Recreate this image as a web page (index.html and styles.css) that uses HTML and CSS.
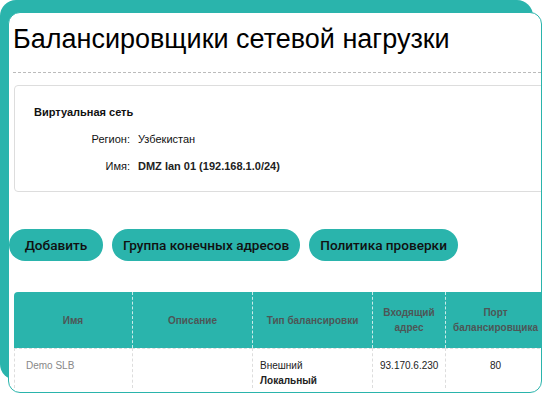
FILE: index.html
```html
<!DOCTYPE html>
<html lang="ru">
<head>
    <meta charset="UTF-8">
    <title>Балансировщики сетевой нагрузки</title>
    <link rel="stylesheet" href="styles.css">
</head>
<body>

<div class="frame">
    <div class="card">
        <h1 class="title">Балансировщики сетевой нагрузки</h1>
        <div class="divider"></div>

        <div class="info">
            <div class="info-head">Виртуальная сеть</div>
            <div class="info-label">Регион:</div>
            <div class="info-value">Узбекистан</div>
            <div class="info-label">Имя:</div>
            <div class="info-value strong">DMZ lan 01 (192.168.1.0/24)</div>
        </div>

        <div class="actions">
            <button class="btn btn-add">Добавить</button>
            <button class="btn">Группа конечных адресов</button>
            <button class="btn">Политика проверки</button>
        </div>

        <table class="grid">
            <colgroup>
                <col class="col-name">
                <col class="col-desc">
                <col class="col-type">
                <col class="col-addr">
                <col class="col-port">
            </colgroup>
            <thead>
                <tr>
                    <th>Имя</th>
                    <th>Описание</th>
                    <th>Тип балансировки</th>
                    <th>Входящий<br>адрес</th>
                    <th>Порт<br>балансировщика</th>
                </tr>
            </thead>
            <tbody>
                <tr>
                    <td class="name">Demo SLB</td>
                    <td></td>
                    <td>Внешний<br><b>Локальный</b></td>
                    <td class="center">93.170.6.230</td>
                    <td class="center">80</td>
                </tr>
            </tbody>
        </table>
    </div>
</div>

</body>
</html>
```

FILE: styles.css
```css
html, body {
    margin: 0;
    height: 394px;
    overflow: hidden;
    background-color: white;
    font-family: "Liberation Sans", Arial, sans-serif;
}
.frame {
    width: 533px;
    height: 380px;
    padding: 12px 0 0 8px;
    box-sizing: border-box;
    background-color: #2ab4ac;
    border-radius: 16px;
}
.card {
    width: 534px;
    height: 381px;
    box-sizing: border-box;
    background-color: white;
    border: 1px solid #2ab4ac;
    border-radius: 12px;
    overflow: hidden;
}
.title {
    margin: 0;
    padding: 11px 0 0 4px;
    font-size: 27px;
    font-weight: normal;
    line-height: 30px;
    color: #000;
}
.divider {
    margin: 18px 0 0 4px;
    border-top: 1px dashed #bbb;
}
.info {
    display: grid;
    grid-template-columns: 96px auto;
    column-gap: 8px;
    row-gap: 10px;
    align-content: start;
    width: 560px;
    height: 107px;
    box-sizing: border-box;
    margin: 12px 0 0 5px;
    padding: 18px 19px;
    border: 1px solid #ddd;
    border-radius: 4px;
    font-size: 11px;
    line-height: 17px;
    color: #111;
}
.info-head {
    grid-column: 1 / 3;
    font-weight: bold;
}
.info-label {
    text-align: right;
}
.strong {
    font-weight: bold;
    color: #222;
}
.actions {
    display: flex;
    gap: 9px;
    margin-top: 37px;
}
.btn {
    height: 32px;
    padding: 0 11px;
    background-color: #2ab4ac;
    border: none;
    border-radius: 16px;
    font-family: Roboto, sans-serif;
    font-size: 13.6px;
    font-weight: 500;
    color: #111;
    cursor: pointer;
}
.btn-add {
    min-width: 94px;
}
.grid {
    margin: 31px 0 0 5px;
    border-collapse: separate;
    border-spacing: 0;
    table-layout: fixed;
    width: 531px;
    font-size: 10px;
    line-height: 15px;
}
.col-name { width: 118px; }
.col-desc { width: 120px; }
.col-type { width: 120px; }
.col-addr { width: 73px; }
.col-port { width: 100px; }
.grid th {
    height: 56px;
    padding: 0 4px;
    background-color: #2ab4ac;
    color: #4d5656;
    font-weight: bold;
    text-align: center;
    border-left: 1px dashed rgba(255, 255, 255, 0.75);
}
.grid th:first-child {
    border-left: none;
    border-top-left-radius: 4px;
}
.grid td {
    padding: 9px 7px 0;
    vertical-align: top;
    color: #222;
    border-top: 1px dashed #ddd;
    border-left: 1px dashed #ddd;
}
.grid td.name {
    padding-left: 11px;
    color: #888;
}
.grid td.center {
    text-align: center;
}
```
